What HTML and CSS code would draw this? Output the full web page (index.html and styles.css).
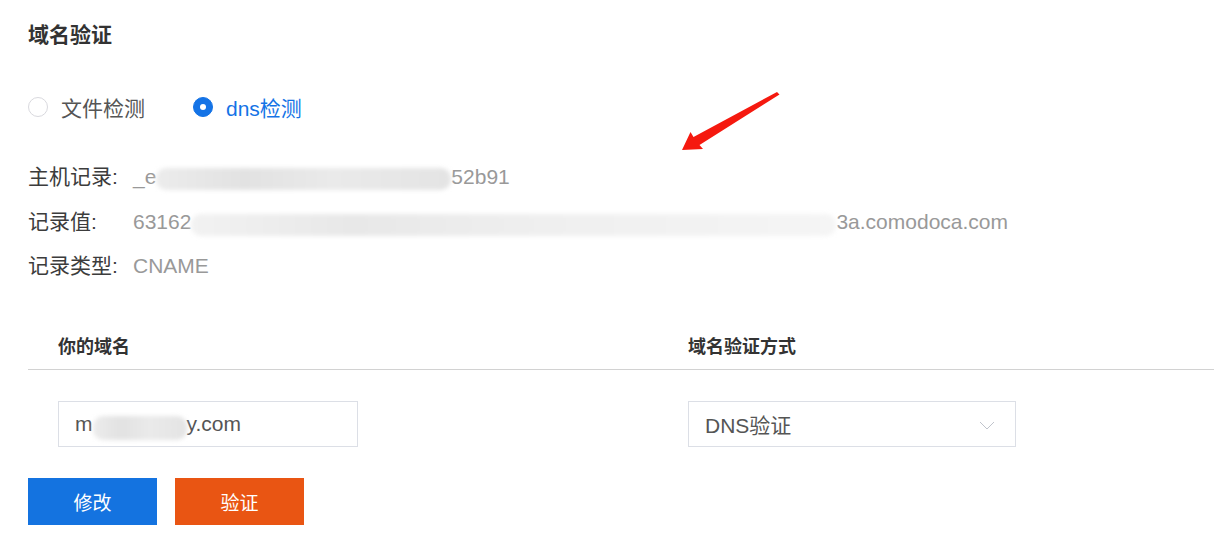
FILE: index.html
```html
<!DOCTYPE html>
<html>
  <head>
    <title>域名验证</title>
    <link rel="stylesheet" href="styles.css">
  </head>
  <body>
    <div class="page">
      <h2 class="title">域名验证</h2>

      <div class="radio-group">
        <label class="radio">
          <span class="radio-dot"></span>
          <span class="radio-text">文件检测</span>
        </label>
        <label class="radio checked">
          <span class="radio-dot"></span>
          <span class="radio-text">dns检测</span>
        </label>
      </div>

      <div class="record-list">
        <div class="record-row">
          <span class="record-label">主机记录:</span>
          <span class="record-value">_e<span class="mask mask-host"></span>52b91</span>
        </div>
        <div class="record-row">
          <span class="record-label">记录值:</span>
          <span class="record-value">63162<span class="mask mask-value"></span>3a.comodoca.com</span>
        </div>
        <div class="record-row">
          <span class="record-label">记录类型:</span>
          <span class="record-value">CNAME</span>
        </div>
      </div>

      <div class="domain-table">
        <div class="table-head">
          <div class="cell cell-domain">你的域名</div>
          <div class="cell">域名验证方式</div>
        </div>
        <div class="table-body">
          <div class="cell cell-domain">
            <div class="input">m<span class="mask mask-domain"></span>y.com</div>
          </div>
          <div class="cell">
            <div class="select">
              <span>DNS验证</span>
              <svg class="chevron" width="16" height="9" viewBox="0 0 16 9">
                <path d="M1 1 L8 8 L15 1" fill="none" stroke="#c0c4cc" stroke-width="1"/>
              </svg>
            </div>
          </div>
        </div>
      </div>

      <div class="actions">
        <button class="btn btn-edit">修改</button>
        <button class="btn btn-verify">验证</button>
      </div>

      <!-- annotation arrow -->
      <svg class="arrow" width="104" height="64" viewBox="0 0 104 64">
        <path d="M97 2 L99.5 4.5 L19.5 55 L23 59 L2 60 L10.5 42 L13.5 47 Z" fill="#f5190f"/>
      </svg>
    </div>
  </body>
</html>
```

FILE: styles.css
```css
body {
  margin: 0;
  padding: 0;
  background-color: #fff;
  font-family: "Liberation Sans", Arial, "Noto Sans CJK SC", sans-serif;
  color: #333;
}

.page {
  position: relative;
  padding: 22px 0 0 28px;
  height: 517px;
}

.title {
  margin: 0;
  font-size: 21px;
  line-height: 26px;
  font-weight: bold;
  color: #333;
}

.radio-group {
  display: flex;
  gap: 48px;
  margin-top: 47px;
  height: 24px;
  align-items: center;
}

.radio {
  display: flex;
  align-items: center;
  gap: 13px;
  font-size: 21px;
  color: #555;
}

.radio-dot {
  width: 18px;
  height: 18px;
  border: 1px solid #d9d9de;
  border-radius: 50%;
  display: inline-block;
  position: relative;
}

.radio.checked .radio-dot {
  background-color: #1473e6;
  border-color: #1473e6;
}

.radio.checked .radio-dot::after {
  content: "";
  position: absolute;
  left: 6px;
  top: 6px;
  width: 6px;
  height: 6px;
  border-radius: 50%;
  background-color: #fff;
}

.radio.checked .radio-text {
  color: #1473e6;
}

.record-list {
  display: flex;
  flex-direction: column;
  gap: 20.5px;
  margin-top: 46px;
}

.record-row {
  display: flex;
  height: 24px;
  line-height: 24px;
  font-size: 21px;
}

.record-label {
  width: 105px;
  color: #3c3c3c;
}

.record-value {
  color: #999;
  white-space: nowrap;
  display: flex;
  align-items: center;
}

.mask {
  display: inline-block;
  height: 22px;
  background: linear-gradient(90deg, #ececec, #e2e2e2 30%, #eaeaea 60%, #e4e4e4);
  filter: blur(2px);
  border-radius: 10px;
}

.mask-host {
  width: 295px;
  margin-top: 3px;
}

.mask-value {
  width: 645px;
  margin-top: 6px;
  background: linear-gradient(90deg, #f2f2f2, #e8e8e8 25%, #ededed 45%, #f0f0f0 60%, #f5f5f5);
}

.mask-domain {
  width: 94px;
  height: 24px;
  margin-top: 8px;
}

.domain-table {
  margin-top: 42px;
}

.table-head {
  display: flex;
  height: 49px;
  align-items: center;
  border-bottom: 1px solid #d2d2d2;
  font-size: 18px;
  font-weight: bold;
  color: #333;
}

.cell {
  flex: 1;
}

.cell-domain {
  flex: 0 0 630px;
  padding-left: 30px;
}

.table-body {
  display: flex;
  padding-top: 31px;
}

.input,
.select {
  height: 44px;
  border: 1px solid #dcdfe6;
  display: flex;
  align-items: center;
  padding: 0 16px;
  font-size: 21px;
  color: #555;
}

.input {
  width: 266px;
}

.select {
  width: 294px;
  justify-content: space-between;
}

.chevron {
  margin-right: 4px;
  margin-top: 2px;
}

.actions {
  display: flex;
  gap: 18px;
  margin-top: 31px;
}

.btn {
  width: 129px;
  height: 47px;
  border: none;
  color: #fff;
  font-size: 19px;
  font-family: "Liberation Sans", "Noto Sans CJK SC", sans-serif;
  cursor: pointer;
}

.btn-edit {
  background-color: #1473e0;
}

.btn-verify {
  background-color: #e95513;
}

.arrow {
  position: absolute;
  left: 680px;
  top: 90px;
}
```
